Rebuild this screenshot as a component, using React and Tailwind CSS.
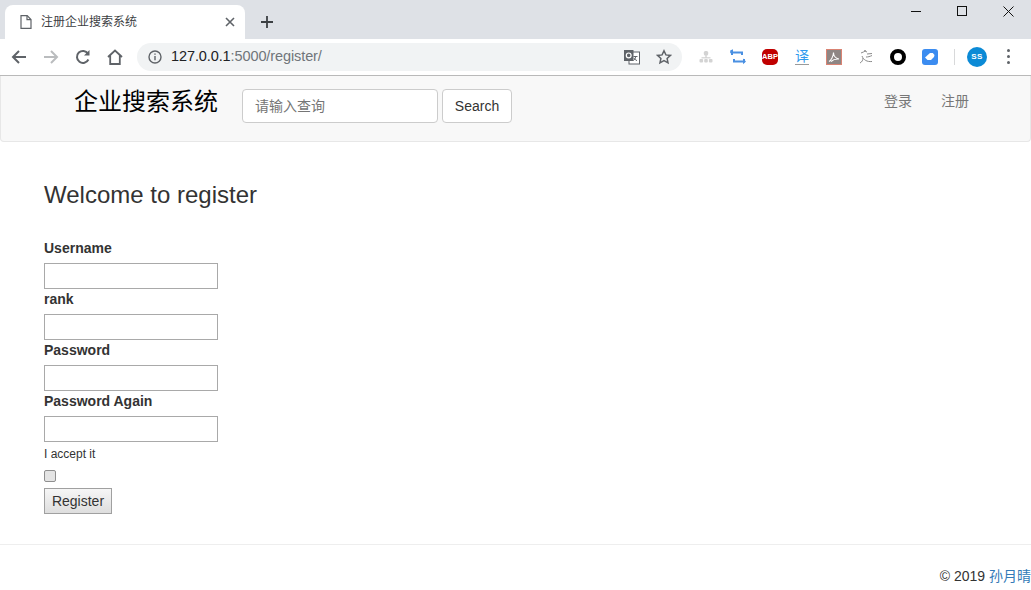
const sans = "font-['Liberation_Sans','Noto_Sans_CJK_SC',sans-serif]";

function ToolSlot({ children, className = "" }) {
    return <div className={`w-[32px] h-[32px] flex items-center justify-center shrink-0 ${className}`}>{children}</div>;
}

function TabStrip() {
    return (
        <div className="h-[39px] bg-[#dee1e6] flex items-end pl-[5px]">
            {/* Tab */}
            <div className="w-[240px] h-[34px] bg-white rounded-t-[8px] flex items-center pl-[15px] pr-[10px]">
                <svg width="12" height="14" viewBox="0 0 12 14" fill="none" stroke="#5f6368" strokeWidth="1.2" className="shrink-0">
                    <path d="M1 .7h6.2L11 4.5v8.8H1z" />
                    <path d="M7 .7v4h4" />
                </svg>
                <span className="ml-[9px] text-[12px] text-[#3c4043] flex-1 whitespace-nowrap">注册企业搜索系统</span>
                <svg width="10" height="10" viewBox="0 0 10 10" stroke="#5f6368" strokeWidth="1.6">
                    <path d="M1 1l8 8M9 1l-8 8" />
                </svg>
            </div>
            <div className="w-[44px] h-[34px] flex items-center justify-center">
                <svg width="12" height="12" viewBox="0 0 12 12" stroke="#3c4043" strokeWidth="1.8">
                    <path d="M6 0v12M0 6h12" />
                </svg>
            </div>
            {/* Window buttons */}
            <div className="ml-auto self-start flex h-[22px] items-center">
                <div className="w-[46px] flex justify-center">
                    <div className="w-[10px] h-px bg-[#111]"></div>
                </div>
                <div className="w-[46px] flex justify-center">
                    <div className="w-[10px] h-[10px] border border-[#111]"></div>
                </div>
                <div className="w-[46px] flex justify-center">
                    <svg width="11" height="11" viewBox="0 0 11 11" stroke="#111" strokeWidth="1">
                        <path d="M.5.5l10 10M10.5.5l-10 10" />
                    </svg>
                </div>
            </div>
        </div>
    );
}

function Toolbar() {
    return (
        <div className="h-[37px] bg-white border-b border-[#b9b9b9] flex items-center pl-[3px] pb-[1px]">
            <ToolSlot>
                <svg width="16" height="14" viewBox="0 0 16 14" fill="none" stroke="#5f6368" strokeWidth="2">
                    <path d="M15 7H2M8 1L2 7l6 6" />
                </svg>
            </ToolSlot>
            <ToolSlot>
                <svg width="16" height="14" viewBox="0 0 16 14" fill="none" stroke="#babcbe" strokeWidth="2">
                    <path d="M1 7h13M8 1l6 6-6 6" />
                </svg>
            </ToolSlot>
            <ToolSlot>
                <svg width="16" height="16" viewBox="0 0 16 16" fill="none" stroke="#5f6368" strokeWidth="2">
                    <path d="M13.4 10.5A6 6 0 1 1 13 4.6" />
                    <path d="M14.5 1v5.5H9z" fill="#5f6368" stroke="none" />
                </svg>
            </ToolSlot>
            <ToolSlot>
                <svg width="16" height="16" viewBox="0 0 16 16" fill="none" stroke="#5f6368" strokeWidth="1.8">
                    <path d="M1 8l7-6.5L15 8M3.2 6.5V15h9.6V6.5" />
                </svg>
            </ToolSlot>

            {/* Omnibox */}
            <div className="ml-[6px] w-[545px] h-[28px] rounded-full bg-[#f1f3f4] flex items-center pl-[11px] shrink-0">
                <svg width="14" height="14" viewBox="0 0 14 14" fill="none" stroke="#5f6368" strokeWidth="1.4">
                    <circle cx="7" cy="7" r="6" />
                    <path d="M7 6v4.2M7 3.4v1.4" />
                </svg>
                <span className="ml-[9px] text-[14.5px] tracking-[-0.1px] text-[#202124] whitespace-nowrap">
                    127.0.0.1<span className="text-[#70757a]">:5000/register/</span>
                </span>
                <div className="ml-auto flex items-center">
                    <ToolSlot>
                        <svg width="16" height="16" viewBox="0 0 16 16">
                            <rect x="5" y="3" width="10.5" height="12" fill="#fff" stroke="#5f6368" />
                            <rect x="0" y="1" width="9.5" height="11" fill="#5f6368" />
                            <circle cx="4.7" cy="6.4" r="2.4" fill="none" stroke="#fff" strokeWidth="1.2" />
                            <path d="M9.5 7.5h4M11.5 7v1c0 1.5-1 2.8-2 3.5M10 9c.5 1 1.5 2 3 2.6" fill="none" stroke="#5f6368" strokeWidth="1" />
                        </svg>
                    </ToolSlot>
                    <ToolSlot>
                        <svg width="16" height="16" viewBox="0 0 16 16" fill="none" stroke="#5f6368" strokeWidth="1.5">
                            <path d="M8 1.8l1.9 4.1 4.5.5-3.3 3 .9 4.4L8 11.6l-4 2.2.9-4.4-3.3-3 4.5-.5z" />
                        </svg>
                    </ToolSlot>
                    <div className="w-[2px]"></div>
                </div>
            </div>

            {/* Extensions */}
            <div className="ml-[8px] flex items-center">
                <ToolSlot>
                    <svg width="14" height="14" viewBox="0 0 14 14" fill="#d3d3d3">
                        <rect x="4.8" y="1" width="4.4" height="4.4" rx="1.5" />
                        <rect x="6.3" y="5" width="1.4" height="3" />
                        <rect x="2.5" y="7.2" width="9" height="1.2" />
                        <rect x="0.5" y="9" width="3.6" height="3.6" rx="1" />
                        <rect x="5.2" y="9" width="3.6" height="3.6" rx="1" />
                        <rect x="9.9" y="9" width="3.6" height="3.6" rx="1" />
                    </svg>
                </ToolSlot>
                <ToolSlot>
                    <svg width="16" height="16" viewBox="0 0 16 16" fill="none" stroke="#4a90e2" strokeWidth="2">
                        <path d="M2 6V3.5h10V6M14 10v2.5H4V10" />
                        <path d="M.2 1.6L3 .3v5L.2 4z" fill="#4a90e2" stroke="none" transform="translate(0 0)" />
                        <path d="M13 9.5l3 2.9-3 2.9z" fill="#4a90e2" stroke="none" />
                    </svg>
                </ToolSlot>
                <ToolSlot>
                    <div className="w-[16px] h-[16px] rounded-[5px] bg-[#c00000] flex items-center justify-center">
                        <span className="text-[7.5px] font-bold text-white leading-none">ABP</span>
                    </div>
                </ToolSlot>
                <ToolSlot>
                    <div className="flex flex-col items-center">
                        <span className="text-[14px] leading-[14px] text-[#2f9bee]">译</span>
                        <div className="w-[14px] h-px bg-[#9a9a9a] mt-[1px]"></div>
                    </div>
                </ToolSlot>
                <ToolSlot>
                    <div className="w-[16px] h-[16px] bg-[#8e8684] border border-[#d98373] flex items-center justify-center">
                        <svg width="12" height="12" viewBox="0 0 12 12" fill="none" stroke="#fff" strokeWidth="1.1">
                            <path d="M1 10.5C3 9.5 5.5 5 5.5 1.5c0 3 2 6 5.5 6.5-3-.2-6 .5-8 2.5" />
                        </svg>
                    </div>
                </ToolSlot>
                <ToolSlot>
                    <svg width="16" height="16" viewBox="0 0 16 16" fill="none" stroke="#8b8b8b" strokeWidth="1">
                        <path d="M3 4c2-.5 3-1.5 5-2.500M6 1.500l3 1.500M4 7c1.500 4 5 6 10 5.500M9 5l5-.5M8 8c2 0 4-.5 6-1.500M2 14c2-1 3-3 3-5" />
                    </svg>
                </ToolSlot>
                <ToolSlot>
                    <div className="w-[16px] h-[16px] rounded-full border-[4px] border-black"></div>
                </ToolSlot>
                <ToolSlot>
                    <div className="w-[16px] h-[16px] rounded-[3px] bg-[#3b8cf0] flex items-center justify-center">
                        <svg width="10" height="9" viewBox="0 0 10 9" fill="#fff">
                            <path d="M0 5.500L5 1h2.800L9.500 3 9 5 6 8H2.500z" />
                        </svg>
                    </div>
                </ToolSlot>
                <div className="ml-[8px] w-px h-[16px] bg-[#d8d9da]"></div>
                <div className="ml-[12px] w-[20px] h-[20px] rounded-full bg-[#0b8ad6] flex items-center justify-center">
                    <span className="text-[8px] font-bold text-white leading-none tracking-[0.3px]">SS</span>
                </div>
                <div className="ml-[20px] flex flex-col gap-[3px]">
                    <div className="w-[3px] h-[3px] rounded-full bg-[#5f6368]"></div>
                    <div className="w-[3px] h-[3px] rounded-full bg-[#5f6368]"></div>
                    <div className="w-[3px] h-[3px] rounded-full bg-[#5f6368]"></div>
                </div>
            </div>
        </div>
    );
}

function Navbar() {
    return (
        <nav className="h-[66px] bg-[#f8f8f8] border border-t-0 border-[#e7e7e7] rounded-b-[4px] flex items-start pl-[73px]">
            <span className="mt-[11px] text-[24px] leading-[30px] text-black whitespace-nowrap">企业搜索系统</span>
            <input
                placeholder="请输入查询"
                className="ml-[24px] mt-[13px] w-[196px] h-[34px] bg-white border border-[#cccccc] rounded-[4px] px-[12px] text-[14px] placeholder:text-[#757575] outline-none"
            />
            <button className="ml-[4px] mt-[13px] w-[70px] h-[34px] bg-white border border-[#cccccc] rounded-[4px] text-[14px] text-[#333]">
                Search
            </button>
            <div className="ml-auto mt-[15px] pr-[61px] flex gap-[29px] text-[14px] leading-[20px] text-[#777]">
                <span>登录</span>
                <span>注册</span>
            </div>
        </nav>
    );
}

function Field({ label }) {
    return (
        <div>
            <label className="block mb-[5px] text-[14px] leading-[20px] font-bold text-[#333]">{label}</label>
            <input className="block w-[174px] h-[26px] border border-[#a9a9a9] bg-white outline-none" />
        </div>
    );
}

export default function App() {
    return (
        <div className={`w-[1031px] h-[590px] overflow-hidden bg-white ${sans}`}>
            <TabStrip />
            <Toolbar />
            <Navbar />

            <main className="pl-[44px] pt-[36px]">
                <h3 className="text-[24px] leading-[34px] text-[#333]">Welcome to register</h3>
                <form className="mt-[26px]">
                    <Field label="Username" />
                    <Field label="rank" />
                    <Field label="Password" />
                    <Field label="Password Again" />
                    <div className="mt-[4px] text-[12px] leading-[17px] text-[#333]">I accept it</div>
                    <input type="checkbox" className="block mt-[7px] w-[12px] h-[12px] appearance-none rounded-[2px] border border-[#8f8f8f] bg-[#e4e4e4]" />
                    <button type="button" className="block mt-[6px] w-[68px] h-[26px] border border-[#a0a0a0] bg-gradient-to-b from-[#f6f6f6] to-[#dedede] text-[14px] text-[#333]">
                        Register
                    </button>
                </form>
            </main>

            <hr className="mt-[30px] border-t border-[#eeeeee]" />
            <footer className="mt-[21px] text-right text-[14px] leading-[20px] text-[#333]">
                © 2019 <span className="text-[#337ab7]">孙月晴</span>
            </footer>
        </div>
    );
}
